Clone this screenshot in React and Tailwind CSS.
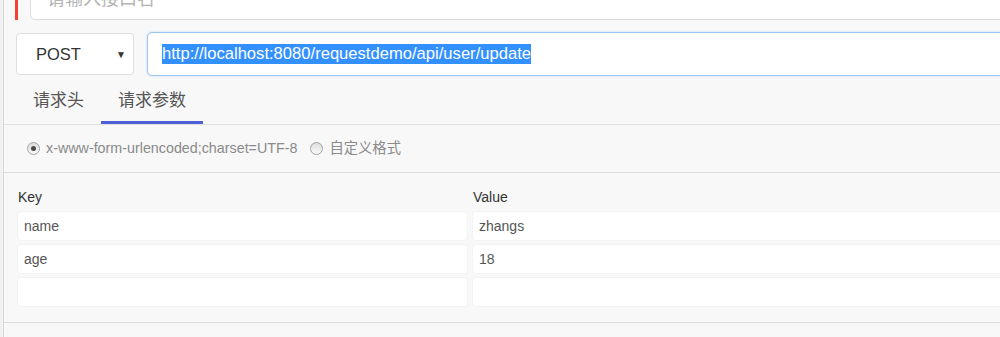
import React from "react";

const font = { fontFamily: '"Liberation Sans", "Noto Sans CJK SC", sans-serif' };

function Radio({ checked }) {
  return (
    <span className="relative inline-flex w-[13px] h-[13px] shrink-0 items-center justify-center rounded-full border border-[#a3a3a3] bg-linear-to-b from-[#dcdcdc] to-[#fbfbfb]">
      {checked && <span className="w-[5px] h-[5px] rounded-full bg-[#4a4a4a]" />}
    </span>
  );
}

function Cell({ children }) {
  return (
    <div className="h-[30px] rounded-[4px] bg-white border border-[#f3f3f3] flex items-center pl-[6px] text-[14px] text-[#555]">
      {children}
    </div>
  );
}

export default function App() {
  const rows = [
    ["name", "zhangs"],
    ["age", "18"],
    ["", ""],
  ];
  return (
    <div className="w-[1000px] h-[337px] overflow-hidden flex bg-[#f8f8f8]" style={font}>
      <div className="w-[3px] shrink-0 bg-[#f1f1f1]" />
      <div className="flex-1 min-w-0 flex flex-col border-l border-[#d8d8d8] overflow-hidden">
        {/* top name row */}
        <div className="h-[20px] shrink-0 flex items-end overflow-hidden">
          <div className="ml-[11px] w-[3px] h-[20px] shrink-0 bg-[#f5412f] self-start" />
          <div className="ml-[12px] w-[1000px] h-[42px] shrink-0 rounded-[5px] border border-[#dcdcdc] bg-white flex items-center pl-[16px] text-[18px] text-[#b5b5b5]">
            请输入接口名
          </div>
        </div>

        {/* method + url */}
        <div className="mt-[12px] h-[44px] shrink-0 flex items-center">
          <div className="ml-[12px] w-[118px] h-[42px] shrink-0 rounded-[4px] border border-[#dedede] bg-white flex items-center pl-[19px] pr-[7px] text-[16.5px] text-[#333]">
            <span className="flex-1">POST</span>
            <span className="text-[10px] text-[#333]">▼</span>
          </div>
          <div className="ml-[13px] w-[900px] h-[44px] shrink-0 rounded-[5px] border border-[#9cc8ef] bg-white shadow-[0_0_2px_rgba(120,180,240,0.5)] flex items-center pl-[14px] text-[16.6px]">
            <span className="bg-[#3390ff] text-white leading-[20px]">http://localhost:8080/requestdemo/api/user/update</span>
          </div>
        </div>

        {/* tabs */}
        <div className="h-[49px] shrink-0 flex border-b border-[#e2e2e2] pl-[12px]">
          <div className="h-[48px] px-[17px] pt-[13px] leading-[24px] text-[17px] text-[#555] border-b-[3px] border-transparent">
            请求头
          </div>
          <div className="h-[48px] px-[17px] pt-[13px] leading-[24px] text-[17px] text-[#555] border-b-[3px] border-[#4f5fd5]">
            请求参数
          </div>
        </div>

        {/* radio row */}
        <div className="h-[48px] shrink-0 flex items-center border-b border-[#dedede] pl-[23px] text-[14.3px] text-[#8a8a8a]">
          <Radio checked />
          <span className="ml-[6px]">x-www-form-urlencoded;charset=UTF-8</span>
          <span className="ml-[13px] flex"><Radio /></span>
          <span className="ml-[6px]">自定义格式</span>
        </div>

        {/* key value table */}
        <div className="h-[150px] shrink-0 border-b border-[#dcdcdc] pl-[13px] pt-[14px]">
          <div className="grid grid-cols-[451px_600px] gap-x-[4px] gap-y-[3px]">
            <div className="h-[20px] leading-[20px] pl-[1px] text-[14px] text-[#333] mb-[1px]">Key</div>
            <div className="h-[20px] leading-[20px] pl-[1px] text-[14px] text-[#333] mb-[1px]">Value</div>
            {rows.map(([k, v], i) => (
              <React.Fragment key={i}>
                <Cell>{k}</Cell>
                <Cell>{v}</Cell>
              </React.Fragment>
            ))}
          </div>
        </div>
        <div className="flex-1 bg-[#f8f8f8]" />
      </div>
    </div>
  );
}
